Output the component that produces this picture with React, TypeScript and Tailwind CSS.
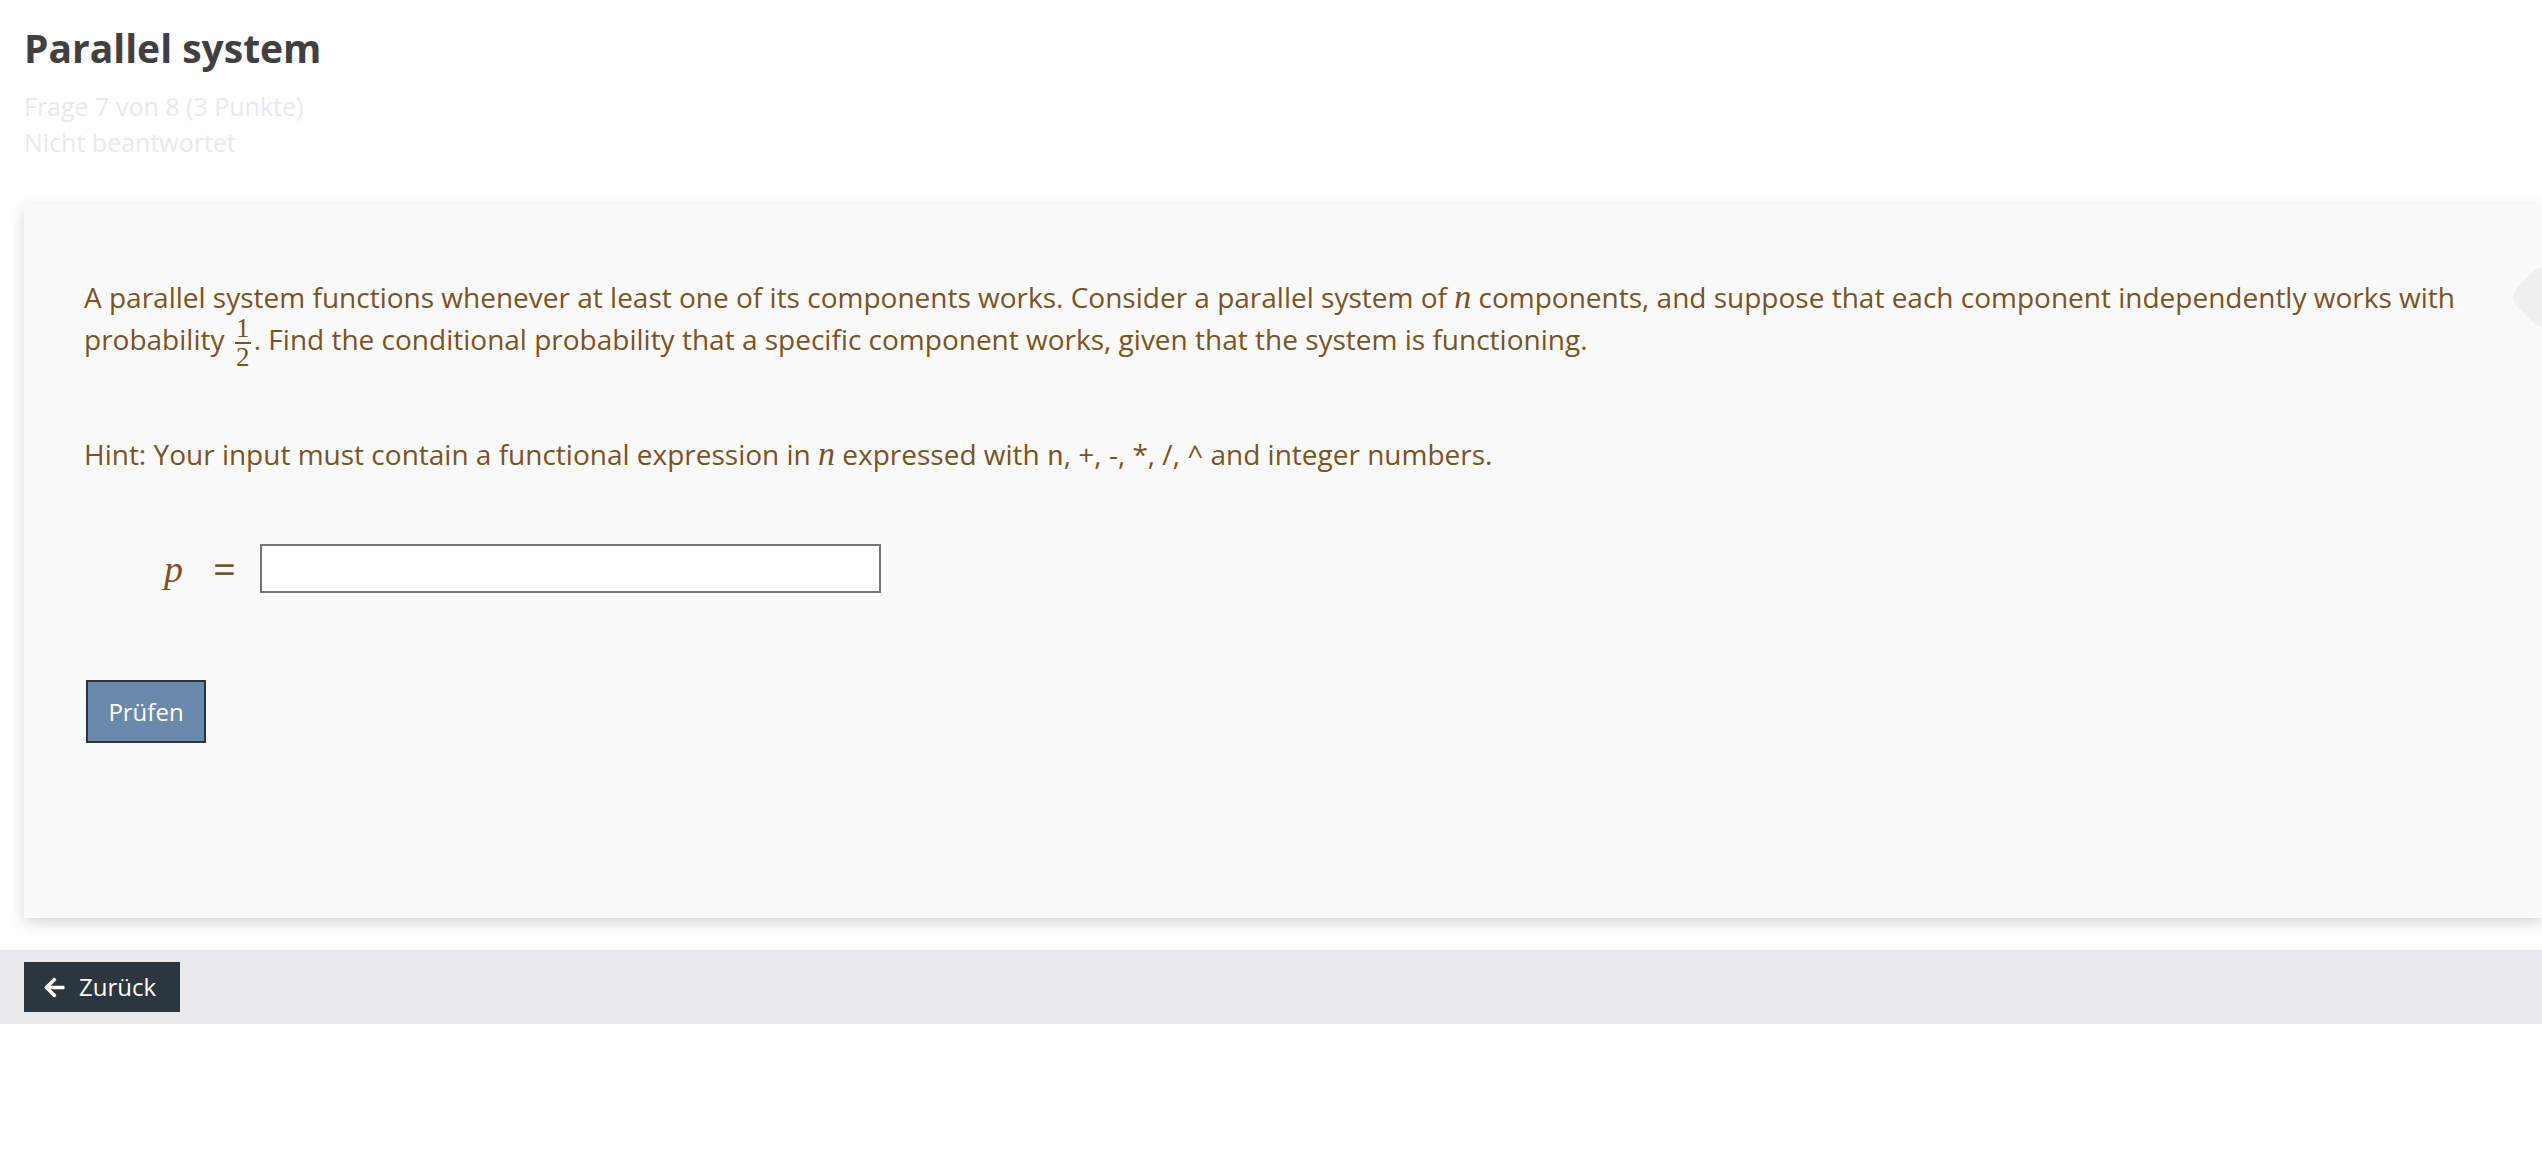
import React from "react";
import { FaArrowLeft } from "react-icons/fa";

function Frac() {
  return (
    <span className="inline-flex flex-col items-center align-middle mx-[3px] my-[-12px] font-['Liberation_Serif',serif] text-[27px] leading-none">
      <span className="px-[1px]">1</span>
      <span className="block h-[2px] w-[16px] bg-[#7b5322]"></span>
      <span className="px-[1px]">2</span>
    </span>
  );
}

function MathN() {
  return <span className="font-['Liberation_Serif',serif] italic text-[34px] leading-none">n</span>;
}

export default function App() {
  return (
    <div className="min-h-[1168px] bg-white font-['Open_Sans',sans-serif] overflow-hidden relative">
      <div className="px-[24px] pt-[24px]">
        <h1 className="text-[39px] leading-[48px] font-bold text-[#404040]">Parallel system</h1>
        <div className="mt-[16px] text-[25px] leading-[36px] text-[#e9eaec]">
          <div>Frage 7 von 8 (3 Punkte)</div>
          <div>Nicht beantwortet</div>
        </div>
      </div>

      <div className="ml-[24px] mt-[44px] h-[714px] bg-[#fafafa] shadow-[0_5px_14px_rgba(0,0,0,0.16)] pl-[60px] pt-[72px] text-[#7b5322] text-[28px] leading-[42px]">
        <p>
          A parallel system functions whenever at least one of its components works. Consider a parallel system of <MathN /> components, and suppose that each component independently works with probability <Frac />. Find the conditional probability that a specific component works, given that the system is functioning.
        </p>
        <p className="mt-[73px]">
          Hint: Your input must contain a functional expression in <MathN /> expressed with{" "}
          <span className="font-['Liberation_Mono',monospace] text-[28px]">n</span>, +, -, *, /, ^ and integer numbers.
        </p>
        <div className="mt-[65px] flex items-center h-[49px]">
          <span className="ml-[80px] w-[20px] font-['Liberation_Serif',serif] italic text-[38px] leading-none">p</span>
          <span className="ml-[29px] text-[40px] leading-none">=</span>
          <input
            type="text"
            className="ml-[24px] w-[621px] h-[49px] bg-white border-2 border-[#757575] outline-none"
          />
        </div>
        <button className="mt-[87px] ml-[2px] w-[120px] h-[63px] bg-[#6b8aab] border-2 border-[#2a3540] text-white text-[24px] leading-none">
          Prüfen
        </button>
      </div>

      <div className="mt-[32px] h-[74px] bg-[#e9eaec] px-[24px] pt-[12px]">
        <button className="h-[50px] w-[156px] bg-[#2c363f] text-white text-[24px] leading-none flex items-center pl-[19px]">
          <FaArrowLeft className="w-[23px] h-[23px]" />
          <span className="ml-[13px]">Zurück</span>
        </button>
      </div>

      <div className="absolute left-[2518px] top-[272px] w-[50px] h-[50px] rotate-45 rounded-[14px] bg-[#efefef]"></div>
    </div>
  );
}
